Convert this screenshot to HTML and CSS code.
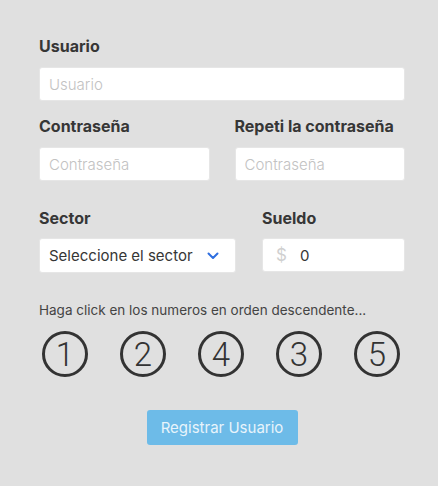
FILE: index.html
```html
<!DOCTYPE html>
<html lang="es">
<head>
<meta charset="utf-8">
<link rel="stylesheet" href="styles.css">
</head>
<body>
<form class="form">
  <div class="field">
    <label class="label">Usuario</label>
    <div class="input"><span class="ph">Usuario</span></div>
  </div>
  <div class="row row-a">
    <div class="field">
      <label class="label">Contraseña</label>
      <div class="input"><span class="ph">Contraseña</span></div>
    </div>
    <div class="field">
      <label class="label">Repeti la contraseña</label>
      <div class="input"><span class="ph">Contraseña</span></div>
    </div>
  </div>
  <div class="row row-b">
    <div class="field">
      <label class="label">Sector</label>
      <div class="input select"><span class="val">Seleccione el sector</span>
        <svg class="chev" width="12" height="8" viewBox="0 0 12 8"><path d="M1.5 1.5 L6 6 L10.5 1.5" fill="none" stroke="#2f6fe0" stroke-width="2" stroke-linecap="round" stroke-linejoin="round"/></svg>
      </div>
    </div>
    <div class="field">
      <label class="label">Sueldo</label>
      <div class="input money"><span class="cur">$</span><span class="val">0</span></div>
    </div>
  </div>
  <p class="hint">Haga click en los numeros en orden descendente...</p>
  <div class="nums">
    <span class="num">1</span>
    <span class="num">2</span>
    <span class="num">4</span>
    <span class="num">3</span>
    <span class="num">5</span>
  </div>
  <div class="actions">
    <button type="button" class="btn">Registrar Usuario</button>
  </div>
</form>
</body>
</html>
```
FILE: styles.css
```css
html, body { margin: 0; padding: 0; }
body {
  background: #e0e0e0;
  font-family: Inter, "Noto Sans", sans-serif;
  color: #333;
  width: 438px;
  height: 486px;
}
.form {
  padding: 36px 33px 0 39px;
  display: flex;
  flex-direction: column;
}
.field { display: flex; flex-direction: column; }
.label {
  font-weight: 700;
  font-size: 16px;
  line-height: 20px;
  color: #363636;
  margin-bottom: 11px;
}
.input {
  box-sizing: border-box;
  height: 34px;
  background: #fff;
  border: 1px solid #e6e6e6;
  border-radius: 3px;
  display: flex;
  align-items: center;
  padding: 0 9px;
  font-size: 15px;
}
.ph { color: #c2c2c2; font-weight: 300; }
.row { display: flex; }
.row-a { margin-top: 15px; gap: 25px; }
.row-a .field { flex: 1; }
.row-b { margin-top: 27px; gap: 26px; }
.row-b .field:first-child { width: 197px; }
.row-b .field:last-child { flex: 1; }
.row-b .label { margin-bottom: 10px; }
.input.select { height: 35px; justify-content: space-between; padding: 0 10px 0 9px; }
.val { color: #363636; }
.chev { margin-right: 6px; }
.money { padding-left: 13px; }
.cur { color: #d0d0d0; margin-right: 13px; font-size: 17px; }
.hint {
  margin: 29px 0 0;
  font-size: 13.5px;
  line-height: 16px;
  color: #444;
}
.nums {
  display: flex;
  justify-content: space-between;
  margin-top: 13px;
  padding: 0 5px 0 3px;
}
.num {
  box-sizing: border-box;
  width: 46px;
  height: 46px;
  border: 3px solid #333;
  border-radius: 50%;
  display: flex;
  align-items: center;
  justify-content: center;
  font-size: 33px;
  font-weight: 300;
  color: #333;
  font-family: Roboto, "Liberation Sans", sans-serif;
}
.actions { display: flex; justify-content: center; margin-top: 33px; }
.btn {
  width: 151px;
  height: 35px;
  border: none;
  border-radius: 3px;
  background: #6dbbe8;
  color: #e8f4fb;
  font-family: Inter, "Noto Sans", sans-serif;
  font-size: 15px;
  font-weight: 400;
  padding: 0;
}
```
